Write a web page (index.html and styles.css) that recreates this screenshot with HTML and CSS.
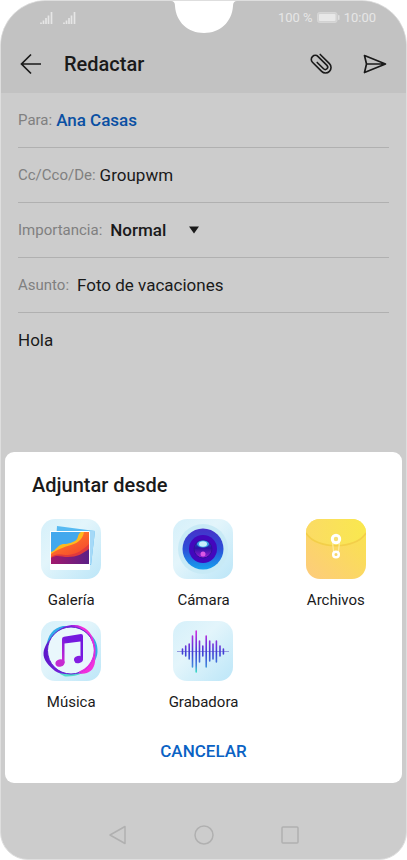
FILE: index.html
```html
<!DOCTYPE html>
<html lang="es">
<head>
    <meta charset="UTF-8">
    <meta name="viewport" content="width=device-width, initial-scale=1.0">
    <title>Redactar</title>
    <link rel="stylesheet" href="styles.css">
</head>
<body>
    <div class="phone">
        <svg class="notch" width="70" height="34" viewBox="0 0 70 34" aria-hidden="true">
            <path d="M0 0 H70 V1 H68 Q64 1 64 6 C63 22 51 33 35 33 C19 33 7 22 6 6 Q6 1 2 1 H0 Z" fill="#fff"/>
        </svg>

        <!-- Status bar -->
        <div class="status">
            <div class="signals">
                <svg width="13" height="12" viewBox="0 0 13 12"><path d="M1 12V10.500M3.500 12V8.500M6 12V6M8.500 12V3.500M11.500 12V0" stroke="#e6e6e6" stroke-width="1.700"/></svg>
                <svg width="13" height="12" viewBox="0 0 13 12"><path d="M1 12V10.500M3.500 12V8.500M6 12V6M8.500 12V3.500M11.500 12V0" stroke="#e6e6e6" stroke-width="1.700"/></svg>
            </div>
            <div class="power">
                <span>100 %</span>
                <svg width="23" height="11" viewBox="0 0 23 11">
                    <rect x=".5" y=".5" width="19.500" height="10" rx="2" fill="#d2d2d2" stroke="#d6d6d6"/>
                    <rect x="2" y="2" width="16.500" height="7" rx="1" fill="#e8e8e8"/>
                    <rect x="21" y="3" width="1.500" height="5" rx=".7" fill="#dedede"/>
                </svg>
                <span>10:00</span>
            </div>
        </div>

        <header class="toolbar">
            <button class="icon-btn" aria-label="Atrás">
                <svg width="22" height="22" viewBox="0 0 22 22"><path d="M11 1.500L1.500 11L11 20.500M1.500 11H21" fill="none" stroke="#1a1a1a" stroke-width="1.700"/></svg>
            </button>
            <h1>Redactar</h1>
            <button class="icon-btn" aria-label="Adjuntar">
                <svg width="24" height="24" viewBox="0 0 24 24">
                    <g transform="translate(1 0) rotate(-45 12 12)" fill="none" stroke="#1a1a1a" stroke-width="1.600" stroke-linecap="round">
                        <path d="M17.500 4V17A5.500 5.500 0 0 1 6.500 17V4A4 4 0 0 1 14.500 4V16.500A2.400 2.400 0 0 1 9.700 16.500V7.500"/>
                    </g>
                </svg>
            </button>
            <button class="icon-btn" aria-label="Enviar">
                <svg width="24" height="20" viewBox="0 0 24 20"><path d="M1.500 1.500L22.500 10L1.500 18.500L3.500 10ZM3.500 10H22" fill="none" stroke="#1a1a1a" stroke-width="1.700" stroke-linejoin="round"/></svg>
            </button>
        </header>

        <form class="compose">
            <div class="field">
                <label for="to">Para:</label>
                <input type="text" id="to" class="contact" value="Ana Casas">
            </div>
            <div class="field">
                <label for="cc">Cc/Cco/De:</label>
                <input type="text" id="cc" value="Groupwm">
            </div>
            <div class="field wide">
                <label for="priority">Importancia:</label>
                <div class="select">
                    <select id="priority">
                        <option>Normal</option>
                        <option>Alta</option>
                        <option>Baja</option>
                    </select>
                    <svg width="10" height="8" viewBox="0 0 10 8"><path d="M0 0.500H10L5 7.500Z" fill="#1a1a1a"/></svg>
                </div>
            </div>
            <div class="field wide">
                <label for="subject">Asunto:</label>
                <input type="text" id="subject" value="Foto de vacaciones">
            </div>
            <textarea class="message" aria-label="Mensaje">Hola</textarea>
        </form>

        <!-- Attach sheet -->
        <section class="sheet">
            <h2>Adjuntar desde</h2>
            <div class="apps">
                <button class="app">
                    <svg width="60" height="60" viewBox="0 0 60 60">
                        <defs>
                            <linearGradient id="ice" x1="0" y1="0" x2="1" y2="1">
                                <stop offset="0" stop-color="#d5f0fa"/>
                                <stop offset=".4" stop-color="#e3f5fb"/>
                                <stop offset="1" stop-color="#bce6f8"/>
                            </linearGradient>
                            <linearGradient id="dune" x1="0" y1="0" x2=".6" y2="1">
                                <stop offset="0" stop-color="#ff9a22"/>
                                <stop offset=".4" stop-color="#ff6d2a"/>
                                <stop offset="1" stop-color="#f0402f"/>
                            </linearGradient>
                            <linearGradient id="dusk" x1="0" y1="0" x2="1" y2="0">
                                <stop offset="0" stop-color="#a3196c"/>
                                <stop offset="1" stop-color="#5b1f86"/>
                            </linearGradient>
                        </defs>
                        <rect width="60" height="60" rx="14" fill="url(#ice)"/>
                        <path d="M16 7L54 12L50 46L14 42Z" fill="#57baf2"/>
                        <path d="M49 11.500L54 12L50 46L49 45Z" fill="#a5d9f7"/>
                        <rect x="9" y="12" width="40" height="39" rx="1" fill="#fff"/>
                        <rect x="10" y="13" width="38" height="32" fill="#43a8ed"/>
                        <path d="M10 33C16 31 15 27 22 25C29 25 31 23 34 22C38 20 36 15 40 13H48V45H10Z" fill="#ffb91e"/>
                        <path d="M10 35C17 30 23 28 30 26C38 24 42 19 43 13H48V45H10Z" fill="url(#dune)"/>
                        <path d="M10 38C16 34 20 36 27 36C36 35 42 31 48 25V45H10Z" fill="#e03a3c"/>
                        <path d="M10 39C16 35 20 38 27 38C36 38 41 35 48 30V45H10Z" fill="url(#dusk)"/>
                    </svg>
                    <span>Galería</span>
                </button>
                <button class="app">
                    <svg width="60" height="60" viewBox="0 0 60 60">
                        <defs>
                            <linearGradient id="ring" x1="0" y1="0" x2="0" y2="1">
                                <stop offset="0" stop-color="#4730c9"/>
                                <stop offset=".5" stop-color="#2c4fd8"/>
                                <stop offset="1" stop-color="#16a0ee"/>
                            </linearGradient>
                            <linearGradient id="lens" x1="0" y1="0" x2="0" y2="1">
                                <stop offset="0" stop-color="#1f5fd0"/>
                                <stop offset=".45" stop-color="#2a12a8"/>
                                <stop offset="1" stop-color="#a01fd6"/>
                            </linearGradient>
                        </defs>
                        <rect width="60" height="60" rx="14" fill="url(#ice)"/>
                        <circle cx="30" cy="30" r="25" fill="#c8eaf6"/>
                        <circle cx="30" cy="30" r="20.500" fill="url(#ring)"/>
                        <circle cx="30" cy="30" r="14" fill="#4307bd"/>
                        <circle cx="30" cy="30" r="9" fill="url(#lens)" stroke="#32109b"/>
                        <ellipse cx="30" cy="25" rx="6" ry="3.500" fill="#3ba3e4"/>
                        <ellipse cx="30" cy="25" rx="4" ry="2.700" fill="#c7effc"/>
                        <circle cx="30" cy="35" r="2.500" fill="#dc58e4"/>
                    </svg>
                    <span>Cámara</span>
                </button>
                <button class="app">
                    <svg width="60" height="60" viewBox="0 0 60 60">
                        <defs>
                            <linearGradient id="folder" x1="1" y1="0" x2="0" y2="1">
                                <stop offset="0" stop-color="#f9e549"/>
                                <stop offset="1" stop-color="#fdcb7d"/>
                            </linearGradient>
                            <linearGradient id="flap" x1="0" y1="0" x2="1" y2="0">
                                <stop offset="0" stop-color="#fbdb65"/>
                                <stop offset="1" stop-color="#f9e84e"/>
                            </linearGradient>
                        </defs>
                        <rect width="60" height="60" rx="14" fill="url(#folder)"/>
                        <path d="M0 14A14 14 0 0 1 14 0H46A14 14 0 0 1 60 14C50 31 10 31 0 14Z" fill="url(#flap)"/>
                        <path d="M0 14C10 31 50 31 60 14" fill="none" stroke="#f3cf49" stroke-width="1.500"/>
                        <path d="M26.500 22L27.500 33M33.500 22L32.500 33" stroke="#fff0ad"/>
                        <circle cx="30" cy="20" r="3.700" fill="#f5df75" stroke="#fff" stroke-width="3"/>
                        <circle cx="30" cy="35.500" r="2.800" fill="#f7d66a" stroke="#fff" stroke-width="2.500"/>
                    </svg>
                    <span>Archivos</span>
                </button>
                <button class="app">
                    <svg width="60" height="60" viewBox="0 0 60 60">
                        <defs>
                            <linearGradient id="glow" x1="0" y1="0" x2="0" y2="1">
                                <stop offset="0" stop-color="#32a9e8"/>
                                <stop offset=".6" stop-color="#32a9e8"/>
                                <stop offset="1" stop-color="#56dfcb"/>
                            </linearGradient>
                            <linearGradient id="halo" x1="0" y1="0" x2="1" y2="0">
                                <stop offset="0" stop-color="#5c18c9"/>
                                <stop offset=".5" stop-color="#8a1ee5"/>
                                <stop offset=".75" stop-color="#f02edb"/>
                                <stop offset="1" stop-color="#f033dc"/>
                            </linearGradient>
                            <linearGradient id="note" x1="1" y1="0" x2="0" y2="1">
                                <stop offset="0" stop-color="#7417df"/>
                                <stop offset=".5" stop-color="#7519df"/>
                                <stop offset="1" stop-color="#d52bd2"/>
                            </linearGradient>
                        </defs>
                        <rect width="60" height="60" rx="14" fill="url(#ice)"/>
                        <path d="M5 26C7 14 12 7 22 5C36 4 50 11 54 19C58 27 57 36 53 41C46 52 36 56 24 55.500C12 50 4 40 5 26Z" fill="url(#glow)"/>
                        <path d="M2.500 32C3 25 8 19 13 14C20 6 26 4 33 4C44 4 51 12 53 20C54 26 55 32 54 41C53 50 46 54 38 52.500C30 52 22 55 14 50C8 45 2 39 2.500 32Z" fill="url(#halo)"/>
                        <circle cx="30" cy="29.500" r="23.500" fill="#e9f7fc" stroke="#5a1fd0"/>
                        <path d="M50 17A23.500 23.500 0 0 1 38 51.500" fill="none" stroke="#e52ce0" stroke-width="1.500"/>
                        <path d="M21 18Q21 16 23 15.700L40 13Q42 13 42 15V38.500H39.500V20.500L23.500 22.500V42H21Z" fill="url(#note)"/>
                        <ellipse cx="19" cy="42" rx="4.700" ry="3.700" transform="rotate(-15 19 42)" fill="#c62bd1"/>
                        <ellipse cx="37.500" cy="38.500" rx="4.500" ry="3.700" transform="rotate(-15 37.500 38.500)" fill="#831de2"/>
                    </svg>
                    <span>Música</span>
                </button>
                <button class="app">
                    <svg width="60" height="60" viewBox="0 0 60 60">
                        <defs>
                            <linearGradient id="wave" gradientUnits="userSpaceOnUse" x1="0" y1="9" x2="0" y2="51">
                                <stop offset="0" stop-color="#d82fe2"/>
                                <stop offset=".28" stop-color="#8330dc"/>
                                <stop offset=".55" stop-color="#3e3fd5"/>
                                <stop offset=".85" stop-color="#4384dc"/>
                                <stop offset="1" stop-color="#38ddc5"/>
                            </linearGradient>
                        </defs>
                        <rect width="60" height="60" rx="14" fill="url(#ice)"/>
                        <path d="M4 30.500H56" stroke="#9299df"/>
                        <path d="M9.500 28V33M12.700 25V35M16.200 23V38M19.500 15V46M23.200 10V51M26.500 20V41M29.800 25V35M33.200 15V46M36.700 20V40M40 23V38M43.400 20V41M47 25V35M50.400 28V33" stroke="url(#wave)" stroke-width="1.600" stroke-linecap="round"/>
                    </svg>
                    <span>Grabadora</span>
                </button>
            </div>
            <button class="cancel">CANCELAR</button>
        </section>

        <nav class="navbar">
            <button class="icon-btn" aria-label="Volver">
                <svg width="20" height="20" viewBox="0 0 20 20"><path d="M17 1.500V18.500L2 10Z" fill="none" stroke="#b0b0b0" stroke-width="1.500" stroke-linejoin="round"/></svg>
            </button>
            <button class="icon-btn" aria-label="Inicio">
                <svg width="20" height="20" viewBox="0 0 20 20"><circle cx="10" cy="10" r="9" fill="none" stroke="#b0b0b0" stroke-width="1.500"/></svg>
            </button>
            <button class="icon-btn" aria-label="Recientes">
                <svg width="20" height="20" viewBox="0 0 20 20"><rect x="2" y="2" width="16" height="16" rx="1" fill="none" stroke="#b0b0b0" stroke-width="1.500"/></svg>
            </button>
        </nav>
    </div>
</body>
</html>
```
FILE: styles.css
```css
* {
    box-sizing: border-box;
}
body {
    margin: 0;
    background-color: #fff;
    color: #1a1a1a;
    font-family: Roboto, sans-serif;
}
button, input, select, textarea {
    font-family: inherit;
    color: inherit;
    background: none;
    border: none;
    padding: 0;
    margin: 0;
}
button {
    cursor: pointer;
}
svg {
    display: block;
}
.phone {
    position: relative;
    display: flex;
    flex-direction: column;
    min-height: 100vh;
    overflow: hidden;
    background-color: #ccc;
    border: 1px solid #dedede;
    border-radius: 46px 46px 28px 28px;
}
.notch {
    position: absolute;
    top: -1px;
    left: 50%;
    transform: translateX(-50%);
}

/* Top bars */
.status {
    display: flex;
    justify-content: space-between;
    align-items: center;
    height: 33px;
    padding: 0 30px 0 39px;
    background-color: #c2c2c2;
    color: #e6e6e6;
    font-size: 13px;
}
.signals {
    display: flex;
    gap: 10px;
}
.power {
    display: flex;
    align-items: center;
    gap: 4px;
}
.toolbar {
    display: flex;
    align-items: center;
    height: 59px;
    padding: 0 19px;
    background-color: #c2c2c2;
}
.toolbar h1 {
    flex: 1;
    margin: 0 0 0 22px;
    font-size: 20px;
    font-weight: 500;
}
.toolbar .icon-btn + .icon-btn {
    margin-left: 30px;
}

/* Message form */
.compose {
    flex: 1;
    display: flex;
    flex-direction: column;
    padding: 0 17px;
}
.field {
    display: flex;
    align-items: center;
    gap: 4px;
    height: 55px;
    border-bottom: 1px solid #b0b0b0;
}
.field.wide {
    gap: 8px;
}
.field label {
    color: #808080;
    font-size: 15px;
}
.field input, .field select, .message {
    font-size: 17px;
}
.field input {
    flex: 1;
    min-width: 0;
}
.field .contact {
    color: #0a50a3;
    font-weight: 500;
}
.select {
    display: flex;
    align-items: center;
    gap: 22px;
}
.select select {
    appearance: none;
    font-weight: 500;
}
.message {
    flex: 1;
    min-height: 60px;
    padding-top: 17px;
    line-height: 20px;
    resize: none;
}

/* Attach sheet */
.sheet {
    margin: 0 4px;
    padding: 18px 0 12px;
    background-color: #fff;
    border-radius: 9px;
}
.sheet h2 {
    margin: 0 27px 19px;
    font-size: 20px;
    font-weight: 500;
    line-height: 30px;
}
.apps {
    display: grid;
    grid-template-columns: repeat(3, 1fr);
    row-gap: 11px;
}
.app {
    display: flex;
    flex-direction: column;
    align-items: center;
    gap: 11px;
    font-size: 15px;
    line-height: 20px;
}
.cancel {
    display: block;
    height: 40px;
    margin: 19px auto 0;
    padding: 0 16px;
    color: #0a62c4;
    font-size: 17px;
    font-weight: 500;
}

.navbar {
    display: flex;
    justify-content: center;
    align-items: center;
    gap: 66px;
    height: 76px;
    padding-top: 28px;
}
```
